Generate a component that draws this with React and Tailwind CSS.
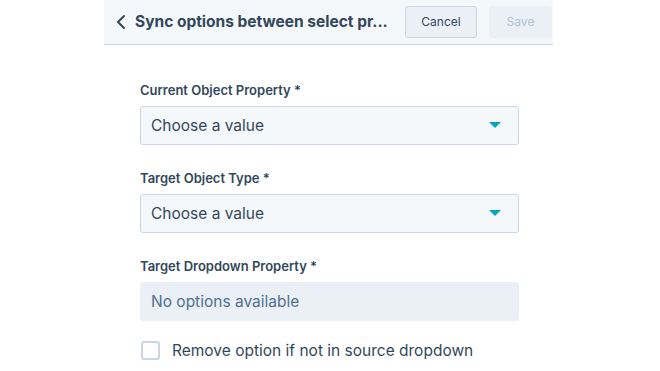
const font = { fontFamily: '"Inter", "Liberation Sans", sans-serif' }

const Caret = () => (
  <svg width="12" height="7" viewBox="0 0 12 7">
    <path d="M0 0 H12 L6 6 Z" fill="#00a4bd" />
  </svg>
)

function SelectField({ label, placeholder, disabled }) {
  return (
    <div className="flex flex-col">
      <label className="mb-[7px] text-[13px] font-semibold leading-[18px] text-[#33475b]">
        {label}
      </label>
      {disabled ? (
        <div className="flex h-[39px] items-center rounded-[3px] bg-[#eaf0f6] px-[11px] text-[15.5px] text-[#516f90]">
          {placeholder}
        </div>
      ) : (
        <div className="flex h-[39px] items-center justify-between rounded-[3px] border border-[#cbd6e2] bg-[#f5f8fa] pl-[10px] pr-[17px] text-[15.5px] text-[#33475b]">
          <span>{placeholder}</span>
          <Caret />
        </div>
      )}
    </div>
  )
}

export default function App() {
  return (
    <div className="min-h-[371px] bg-white pl-[104px]" style={font}>
      <div className="w-[449px]">
        <header className="flex h-[45px] items-center border-b border-[#cbd6e2] bg-[#f5f8fa] pl-[12px] pr-[1px]">
          <svg width="10" height="16" viewBox="0 0 10 16" className="mr-[9px]">
            <path d="M8 2 L2 8 L8 14" fill="none" stroke="#33475b" strokeWidth="2" strokeLinecap="round" />
          </svg>
          <h1 className="flex-1 whitespace-nowrap text-[15.5px] font-bold text-[#33475b]">
            Sync options between select pr...
          </h1>
          <button className="ml-[10px] h-[32px] w-[72px] rounded-[3px] border border-[#cbd6e2] bg-[#eaf0f6] text-[12px] text-[#33475b]">
            Cancel
          </button>
          <button className="ml-[12px] h-[32px] w-[63px] rounded-[3px] bg-[#eaf0f6] text-[12px] text-[#b0c1d4]">
            Save
          </button>
        </header>
        <main className="flex flex-col gap-[24px] pl-[36px] pr-[34px] pt-[36px]">
          <SelectField label="Current Object Property *" placeholder="Choose a value" />
          <SelectField label="Target Object Type *" placeholder="Choose a value" />
          <SelectField label="Target Dropdown Property *" placeholder="No options available" disabled />
          <label className="-mt-[6px] flex items-center gap-[12px] pl-[1px] text-[15.5px] text-[#33475b]">
            <span className="h-[19px] w-[19px] rounded-[3px] border-2 border-[#cbd6e2] bg-white" />
            Remove option if not in source dropdown
          </label>
        </main>
      </div>
    </div>
  )
}
